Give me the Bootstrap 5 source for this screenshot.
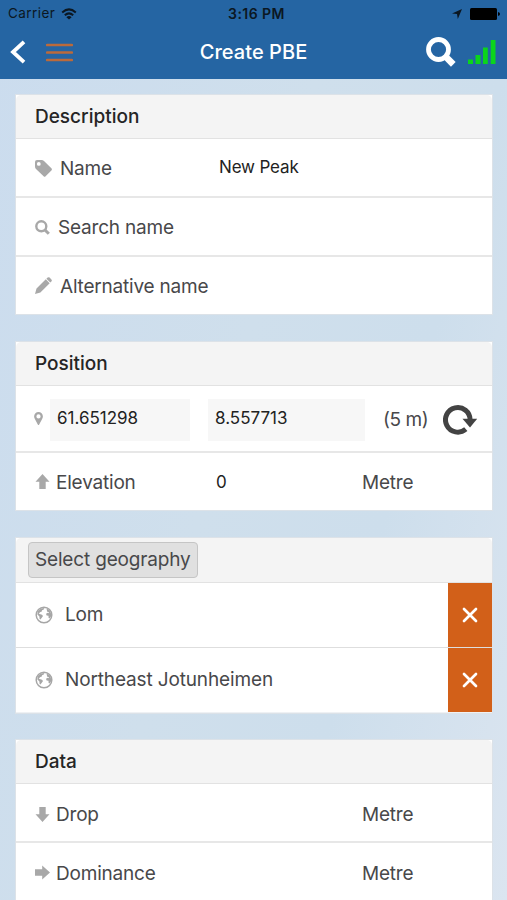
<!DOCTYPE html>
<html lang="en">
<head>
<meta charset="utf-8">
<meta name="viewport" content="width=device-width, initial-scale=1">
<title>Create PBE</title>
<link href="https://cdn.jsdelivr.net/npm/bootstrap@5.3.0/dist/css/bootstrap.min.css" rel="stylesheet">
<style>
  body { font-family: Inter, "Liberation Sans", sans-serif; font-size: 19px; line-height: 24px; color: #48484a; height: 900px;
    background: linear-gradient(105deg, #cbdcee 0%, #cfdfec 45%, #cddeec 70%, #dbe5f0 100%); }
  svg { display: block; flex: none; }
  .topbar { height: 79px; background: #2565a3; }
  .status { height: 27px; padding: 0 7px 0 8px; font-size: 13.5px; line-height: 27px; color: #0b1722; letter-spacing: .45px; }
  .status > div, .bar > div { flex: 1 1 0; }
  .clock { font-weight: 600; font-size: 14px; letter-spacing: .45px; padding-left: 5px; }
  .wifi { margin-left: 6px; }
  .bar { height: 50px; padding: 0 11px 0 10px; }
  .menu-icon { margin-left: 20px; }
  .signal-icon { margin-left: 12px; }
  .title { font-size: 20px; font-weight: 500; color: #fff; letter-spacing: .05px; padding-left: 1px; }
  .panels { padding: 15px 14px 0 15px; gap: 26px; }
  .panel { border: 1px solid #dce2e8; border-radius: 0; background: #fff; }
  .panel-top { height: 44px; padding: 0 19px; background: #f4f4f4; font-weight: 500; color: #252525; border-radius: 0; border-bottom: 1px solid #e2e2e2; }
  .line { height: 59px; padding: 2px 0 0 19px; border-bottom: 2px solid #e7e7e7; letter-spacing: -.2px; }
  .line:last-child { border-bottom: 0; height: 57px; }
  .line.coords { height: 67px; padding-left: 18px; padding-top: 3px; }
  .coords + .line { padding-top: 3px; }
  .data-panel { margin-top: -1px; }
  .data-panel .line { padding-top: 4px; }
  .caption { width: 184px; }
  .narrow { width: 180px; }
  .wide { width: 327px; }
  .icon { margin-bottom: 3px; }
  .after-arrow { margin-left: 6px; }
  .down { transform: rotate(180deg); }
  .right { transform: rotate(90deg); }
  .val { width: 143px; font-size: 17px; color: #222; letter-spacing: -.15px; padding-bottom: 3px; }
  .val.zero { width: 147px; padding-left: 1px; }
  .coord { width: 140px; height: 42px; margin-left: 7px; background: #f7f7f7; font-size: 17px; color: #222; padding: 0 7px 4px; letter-spacing: 0; }
  .coord + .coord { width: 157px; margin-left: 18px; }
  .accuracy { margin-left: 18px; letter-spacing: -.4px; }
  .refresh { margin-left: 15px; }
  .geo-top { height: 45px; }
  .geo { height: 65px; border-bottom: 1px solid #dedede; padding-left: 19px; letter-spacing: -.14px; }
  .geo:last-child { border-bottom: 1px solid #eef1f4; }
  .place { margin-left: 12px; }
  .kill { width: 44px; height: 64px; background: #d26019; }
  .pick { height: 36px; margin-left: -7px; padding: 0 6px; font-size: 19px; line-height: 34px; color: #48484a; background: #e0e0e0; border: 1px solid #c5c5c5; border-radius: 4px; letter-spacing: -.17px; }
</style>
<script src="https://cdn.jsdelivr.net/npm/bootstrap@5.3.0/dist/js/bootstrap.bundle.min.js"></script>
</head>
<body class="overflow-hidden">
<svg class="d-none">
  <symbol id="globe" viewBox="0 0 18 18">
    <circle cx="9" cy="9" r="7.8" fill="none" stroke="#a6a6a6" stroke-width="1.5"/>
    <path fill="#a6a6a6" d="M3 5L6 2.5L9.5 2L8.5 3.7L7 4.3L6.8 5.6L5 6.3L3.8 7.8L7 8.8L8 10L6.8 11.8L5.4 13.6L4.6 13L4.4 10.4L2.4 8.6ZM11.5 2.6L14.5 4L16 7.4L16 10.5L14.6 12.6L13.6 12L13.5 9.8L11.6 9.5L11 7.7L12.8 6.8L14 7.2L13.6 6L12.2 5.8Z"/>
  </symbol>
  <symbol id="arrow" viewBox="0 0 14 15"><path fill="#a8a8a8" d="M7 0L14 7.8H10.2V15H3.8V7.8H0Z"/></symbol>
  <symbol id="cross" viewBox="0 0 16 16"><path stroke="#fff" stroke-width="2.7" stroke-linecap="round" d="M2 2L14 14M14 2L2 14"/></symbol>
</svg>

<header class="topbar">
  <div class="status d-flex">
    <div class="d-flex align-items-center">
      <span>Carrier</span>
      <svg class="wifi" width="16" height="12" viewBox="0 0 16 12" fill="none" stroke="#0b1722" stroke-width="2"><path d="M1.2 4.4Q8 -1.6 14.8 4.4M3.8 7.2Q8 3.5 12.2 7.2"/><path d="M8 11.6L5.4 9.2Q8 7 10.6 9.2Z" fill="#0b1722" stroke="none"/></svg>
    </div>
    <span class="clock">3:16 PM</span>
    <div class="d-flex align-items-center justify-content-end">
      <svg class="me-2" width="10" height="10" viewBox="0 0 10 10"><path d="M10 0L5.8 10L5 5L0 4.4Z" fill="#0b1722"/></svg>
      <svg width="30" height="12" viewBox="0 0 30 12"><rect width="27" height="12" rx="1.5"/><path d="M28 4Q30 4.5 30 6T28 8Z"/></svg>
    </div>
  </div>
  <div class="bar d-flex align-items-center">
    <div class="d-flex align-items-center">
      <svg width="16" height="24" viewBox="0 0 16 24" fill="none" stroke="#fff" stroke-width="3.8"><path d="M14 1.8L3 12L14 22.2"/></svg>
      <svg class="menu-icon" width="27" height="19" viewBox="0 0 27 19"><path d="M1.2 2H25.8M1.2 9.5H25.8M1.2 17H25.8" stroke="#bb6a3b" stroke-width="2.7" stroke-linecap="round"/></svg>
    </div>
    <span class="title">Create PBE</span>
    <div class="d-flex align-items-center justify-content-end">
      <svg width="30" height="30" viewBox="0 0 30 30" fill="none" stroke="#fff"><circle cx="12.5" cy="12.5" r="10" stroke-width="4.8"/><path d="M19.5 19.5L27.3 27.3" stroke-width="6.6"/></svg>
      <svg class="signal-icon" width="28" height="26" viewBox="0 0 28 26" fill="#0bd51c"><path d="M0 20.5H5V25H0ZM7.5 16H12.5V25H7.5ZM15 8.5H19.8V25H15ZM22.7 1H27.5V25H22.7Z"/></svg>
    </div>
  </div>
</header>

<main class="panels d-flex flex-column">
  <section class="card panel">
    <div class="card-header panel-top d-flex align-items-center">Description</div>
    <div class="line d-flex align-items-center">
      <div class="caption d-flex align-items-center"><svg width="17" height="17" viewBox="0 0 17 17"><path fill="#a8a8a8" fill-rule="evenodd" d="M0 2Q0 0 2 0H6.5Q8 0 9 1L16.4 8.3Q17.4 9.5 16.4 10.5L10.6 16.3Q9.6 17.3 8.6 16.3L1 9Q0 8 0 6.5ZM3.8 2A1.9 1.9 0 1 0 3.8 5.8A1.9 1.9 0 1 0 3.8 2Z"/></svg><span class="ms-2">Name</span></div>
      <span class="val">New Peak</span>
    </div>
    <div class="line d-flex align-items-center">
      <svg width="15" height="15" viewBox="0 0 15 15" fill="none" stroke="#a8a8a8"><circle cx="6.3" cy="6.3" r="5" stroke-width="2.4"/><path d="M10 10L13.8 13.8" stroke-width="3"/></svg><span class="ms-2">Search name</span>
    </div>
    <div class="line d-flex align-items-center">
      <svg class="icon" width="17" height="17" viewBox="0 0 17 17" fill="#a8a8a8"><path d="M0 17L1.5 11.6L10.8 2.3L14.7 6.2L5.4 15.5ZM11.4 1.7L12.6 .6Q13.6 -.3 14.6 .6L16.4 2.4Q17.3 3.4 16.4 4.4L15.3 5.6Z"/></svg><span class="ms-2">Alternative name</span>
    </div>
  </section>

  <section class="card panel">
    <div class="card-header panel-top d-flex align-items-center">Position</div>
    <div class="line coords d-flex align-items-center">
      <svg class="icon" width="9" height="13" viewBox="0 0 9 13"><path fill="#a8a8a8" fill-rule="evenodd" d="M4.5 0A4.4 4.4 0 0 1 8.9 4.4Q8.9 5.7 8 7.2L5.2 12.4Q4.5 13.4 3.8 12.4L1 7.2Q.1 5.7 .1 4.4A4.4 4.4 0 0 1 4.5 0ZM4.5 2.3A2.1 2.1 0 1 0 4.5 6.5A2.1 2.1 0 1 0 4.5 2.3Z"/></svg>
      <div class="coord d-flex align-items-center">61.651298</div>
      <div class="coord d-flex align-items-center">8.557713</div>
      <span class="accuracy">(5 m)</span>
      <svg class="refresh" width="34" height="30" viewBox="0 0 34 30"><path d="M22.8 24.2A12.3 12.3 0 1 1 27.1 15" fill="none" stroke="#434343" stroke-width="5"/><path d="M19.5 13.8H34.2L27 22.6Z" fill="#434343"/></svg>
    </div>
    <div class="line d-flex align-items-center">
      <div class="narrow d-flex align-items-center"><svg class="icon" width="15" height="15"><use href="#arrow"/></svg><span class="after-arrow">Elevation</span></div>
      <span class="val zero">0</span>
      <span>Metre</span>
    </div>
  </section>

  <section class="card panel">
    <div class="card-header panel-top geo-top d-flex align-items-center"><button class="btn pick" type="button">Select geography</button></div>
    <div class="geo d-flex align-items-center">
      <svg width="18" height="18"><use href="#globe"/></svg><span class="place">Lom</span>
      <div class="kill ms-auto d-flex align-items-center justify-content-center"><svg width="16" height="16"><use href="#cross"/></svg></div>
    </div>
    <div class="geo d-flex align-items-center">
      <svg width="18" height="18"><use href="#globe"/></svg><span class="place">Northeast Jotunheimen</span>
      <div class="kill ms-auto d-flex align-items-center justify-content-center"><svg width="16" height="16"><use href="#cross"/></svg></div>
    </div>
  </section>

  <section class="card panel data-panel">
    <div class="card-header panel-top d-flex align-items-center">Data</div>
    <div class="line d-flex align-items-center">
      <div class="wide d-flex align-items-center"><svg class="down" width="15" height="15"><use href="#arrow"/></svg><span class="after-arrow">Drop</span></div>
      <span>Metre</span>
    </div>
    <div class="line d-flex align-items-center">
      <div class="wide d-flex align-items-center"><svg class="right icon" width="15" height="15"><use href="#arrow"/></svg><span class="after-arrow">Dominance</span></div>
      <span>Metre</span>
    </div>
  </section>
</main>
</body>
</html>
